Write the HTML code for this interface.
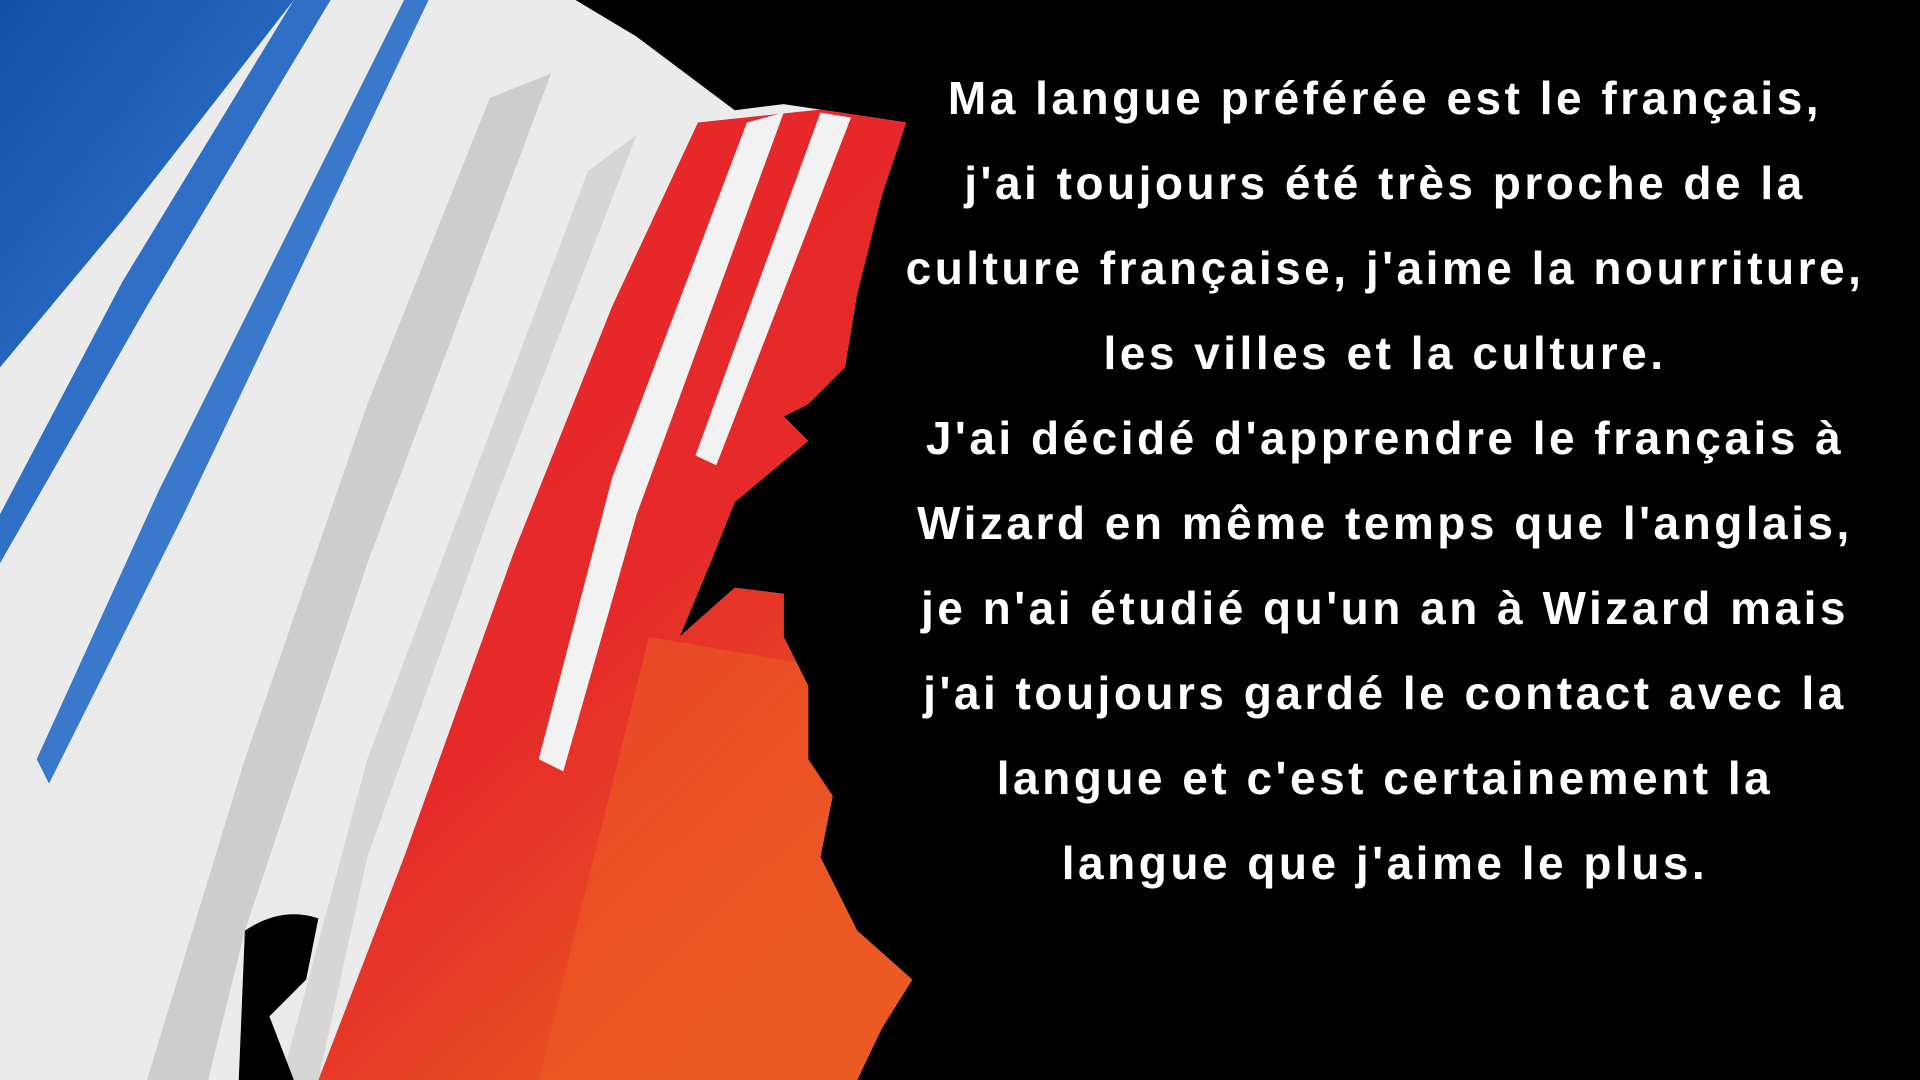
<!DOCTYPE html>
<html><head><meta charset="utf-8"><style>
html,body{margin:0;padding:0;background:#000;width:1920px;height:1080px;overflow:hidden}
svg{position:absolute;left:0;top:0}
.t{position:absolute;left:860px;width:1050px;top:56px;text-align:center;color:#fff;font-family:"Liberation Sans",sans-serif;font-weight:bold;font-size:46px;line-height:85px;letter-spacing:3.5px}
</style></head><body>
<svg width="1920" height="1080" viewBox="0 0 1568 882" preserveAspectRatio="none">
<defs>
<linearGradient id="bl" x1="0" y1="0" x2="1" y2="1"><stop offset="0" stop-color="#0f4fa8"/><stop offset="1" stop-color="#3a7bd0"/></linearGradient>
<linearGradient id="rd" x1="0" y1="0" x2="0.6" y2="1"><stop offset="0" stop-color="#e8242b"/><stop offset="0.6" stop-color="#e62a2a"/><stop offset="1" stop-color="#ea5a20"/></linearGradient>
<clipPath id="cp"><path d="M0 0 L470 0 L520 30 L600 90 L640 85 L740 100 L720 160 L700 240 L690 300 L660 330 L640 340 L660 360 L600 410 L580 460 L555 520 L600 480 L640 485 L640 520 L660 560 L660 620 L680 650 L670 700 L700 760 L745 800 L720 840 L700 882 L0 882 Z"/></clipPath>
</defs>
<rect width="1568" height="882" fill="#000"/>
<g clip-path="url(#cp)">
<rect width="760" height="882" fill="#ebebeb"/>
<polygon points="0,0 240,0 100,180 0,300" fill="url(#bl)"/>
<polygon points="240,0 270,0 120,250 0,460 0,420 100,230" fill="#2f6fc6"/>
<polygon points="330,0 350,0 150,420 40,640 30,620 130,400" fill="#3a78cc"/>
<polygon points="400,80 450,60 300,460 200,760 170,882 120,882 200,620 300,330" fill="#cdcdcd"/>
<polygon points="480,140 520,110 400,420 300,700 260,882 230,882 300,620 390,380" fill="#d6d6d6"/>
<polygon points="570,100 760,80 760,882 260,882 330,700 420,450 500,250" fill="url(#rd)"/>
<polygon points="610,100 640,92 520,420 460,630 440,620 500,390" fill="#f2f2f2"/>
<polygon points="670,92 695,96 585,380 568,372" fill="#f2f2f2"/>
<polygon points="530,520 760,560 760,882 440,882 480,720" fill="#eb5a25" opacity="0.6"/>
</g>
<path d="M200 760 Q230 740 260 750 L250 800 L220 830 L240 882 L195 882 Z" fill="#000"/>
</svg>
<div class="t">Ma langue préférée est le français,<br>j'ai toujours été très proche de la<br>culture française, j'aime la nourriture,<br>les villes et la culture.<br>J'ai décidé d'apprendre le français à<br>Wizard en même temps que l'anglais,<br>je n'ai étudié qu'un an à Wizard mais<br>j'ai toujours gardé le contact avec la<br>langue et c'est certainement la<br>langue que j'aime le plus.</div>
</body></html>
